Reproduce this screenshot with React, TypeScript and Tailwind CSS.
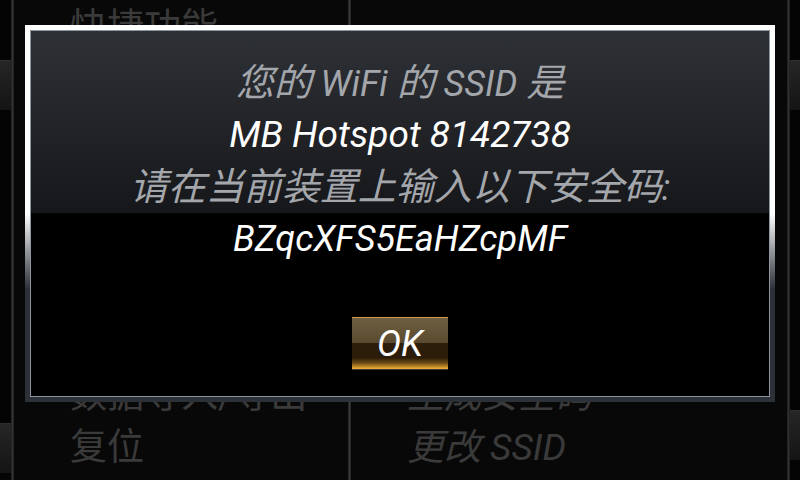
import React from "react";

const font = "[font-family:'Roboto','Noto_Sans_CJK_SC',sans-serif]";

function Tab() {
  return <div className="h-[50px] w-full bg-[linear-gradient(to_bottom,#262626,#141414)] border-t border-[#2e2e2e]" />;
}

function C({ children }: { children: React.ReactNode }) {
  return <span className="text-[38px]">{children}</span>;
}

export default function App() {
  return (
    <div className={`relative w-[800px] h-[480px] overflow-hidden bg-[#040404] ${font}`}>
      <div className="flex h-full">
        {/* left stub */}
        <div className="w-[11px] flex flex-col pt-[60px] pb-[7px] justify-between">
          <Tab />
          <Tab />
        </div>
        <div className="w-[3px] bg-[linear-gradient(to_right,#1c1c1c,#333,#1c1c1c)]" />
        {/* content columns */}
        <div className="flex-1 flex bg-[#080808]">
          <div className="w-[334px] flex flex-col justify-between pl-[56px] pb-[6px] text-[37px] leading-[52px] text-[#3a3a3a]">
            <div className="mt-[2px]">快捷功能</div>
            <div>
              <div>数据导入/导出</div>
              <div>复位</div>
            </div>
          </div>
          <div className="w-[3px] bg-[linear-gradient(to_right,#1e1e1e,#3a3a3a,#1e1e1e)]" />
          <div className="flex-1 flex flex-col justify-end pl-[56px] pb-[6px] text-[37px] leading-[52px] text-[#3a3a3a] italic">
            <div>生成安全码</div>
            <div>更改 SSID</div>
          </div>
        </div>
        <div className="w-[3px] bg-[linear-gradient(to_right,#1c1c1c,#303030,#1c1c1c)]" />
        {/* right stub */}
        <div className="w-[10px] flex flex-col pt-[60px] pb-[20px] justify-between">
          <Tab />
          <Tab />
        </div>
      </div>

      {/* dialog */}
      <div className="absolute left-[25px] top-[25px] w-[750px] h-[377px] p-[5px] bg-[linear-gradient(to_bottom,#ffffff_0%,#ffffff_50%,#2b3137_70%,#2b3137_100%)]">
        <div className="w-full h-full border border-[#8c96a0] bg-[linear-gradient(to_bottom,#2e3136_0%,#16171a_50%,#000_50%,#000_100%)] flex flex-col items-center pt-[26px] italic text-[36px] leading-[52px]">
          <div className="text-[#a3a6ab] h-[52px]">
            <C>您的</C> WiFi <C>的</C> SSID <C>是</C>
          </div>
          <div className="text-white h-[52px] text-[37px]">MB Hotspot 8142738</div>
          <div className="text-[#a3a6ab] h-[52px]">
            <C>请在当前装置上输入以下安全码</C>:
          </div>
          <div className="text-white h-[52px]">BZqcXFS5EaHZcpMF</div>
          <button className="mt-[52px] w-[96px] h-[52px] border-t border-[#c99b4e] bg-[linear-gradient(to_bottom,#6f5e41_0%,#5a4b30_48%,#2c1e0a_50%,#2a1c08_78%,#6b4a14_88%,#f2b236_100%)] shadow-[0_1px_0_#3a3a3a] text-white text-[36px] leading-[50px] italic">
            OK
          </button>
        </div>
      </div>
    </div>
  );
}
